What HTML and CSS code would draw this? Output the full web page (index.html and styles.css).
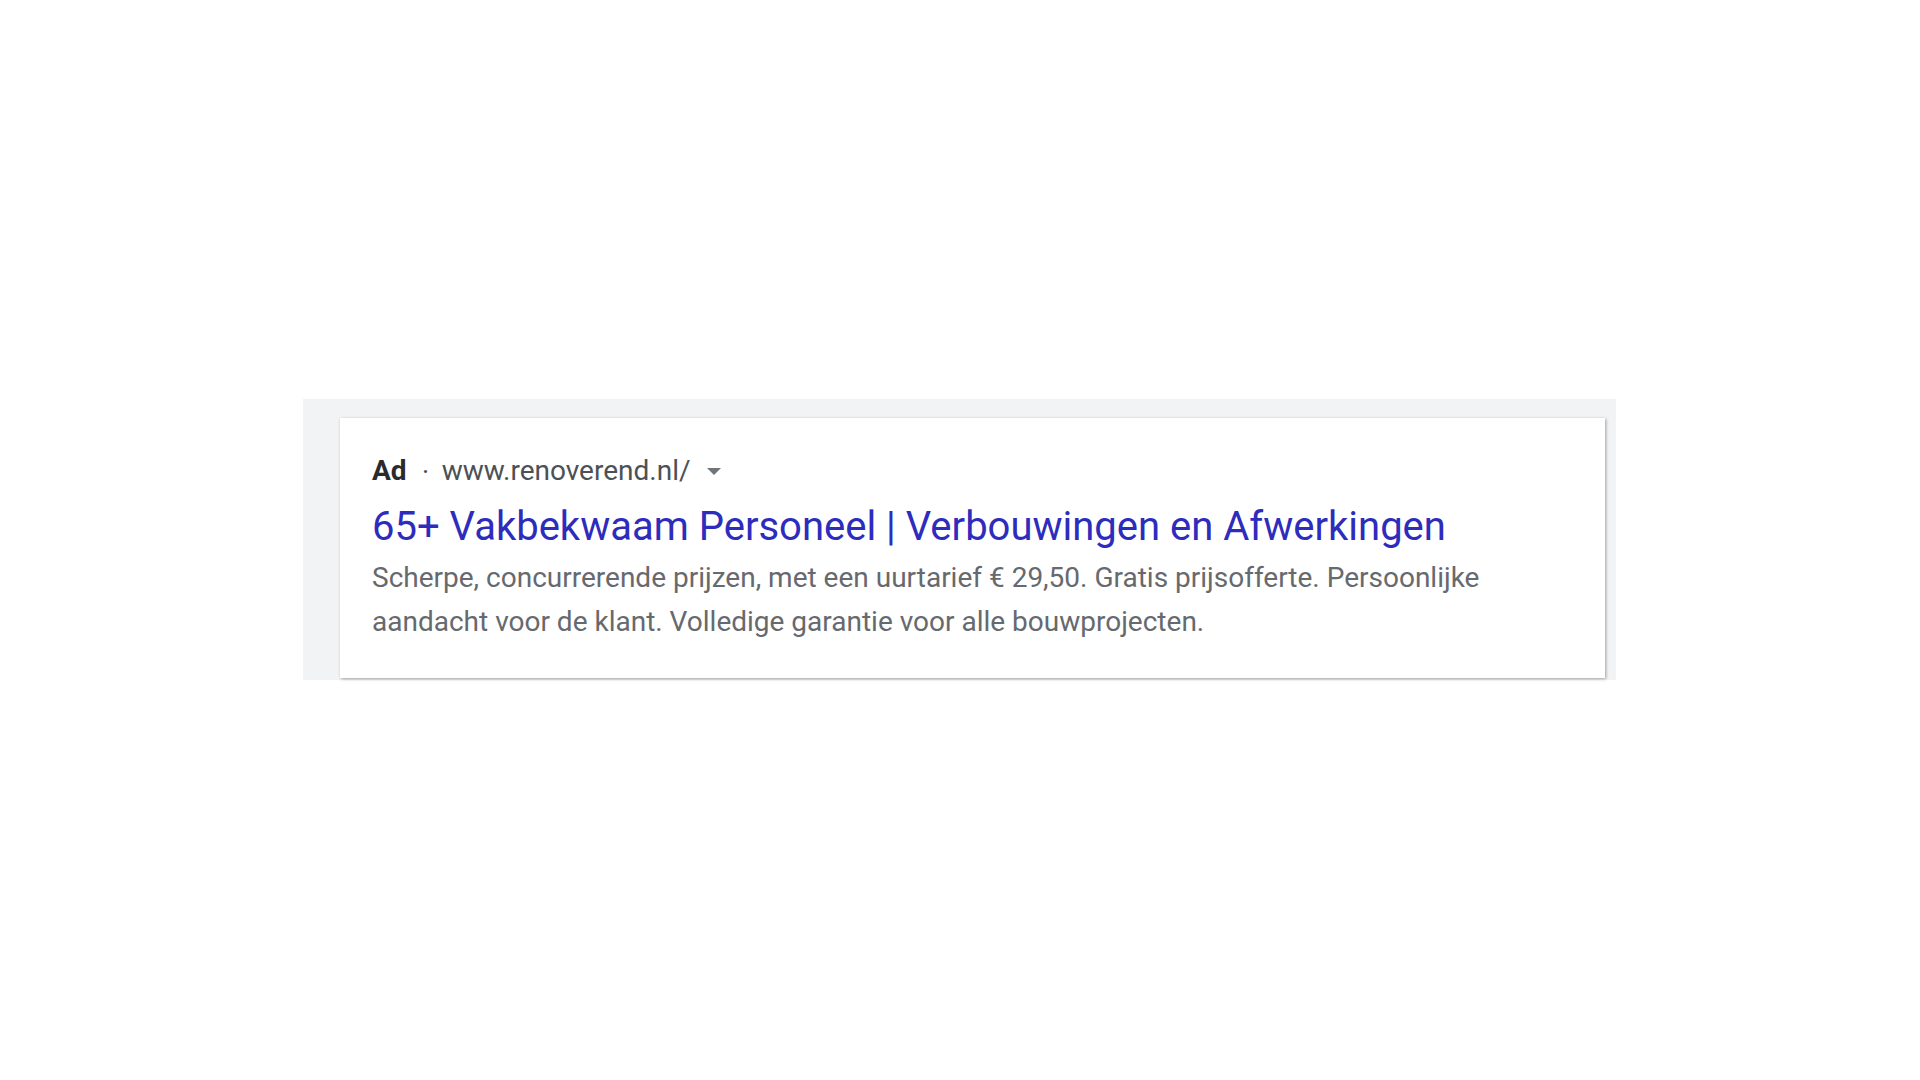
FILE: index.html
```html
<!DOCTYPE html>
<html lang="nl">
<head>
<meta charset="utf-8">
<title>Ad</title>
<link rel="stylesheet" href="styles.css">
</head>
<body>
<div class="stage">
  <div class="frame">
    <div class="card">
      <div class="meta">
        <span class="ad">Ad</span>
        <span class="dot">·</span>
        <span class="url">www.renoverend.nl/</span>
        <svg class="caret" width="16" height="8" viewBox="0 0 16 8"><path d="M1 0 L15 0 L8 7 Z" fill="#70757a"/></svg>
      </div>
      <div class="title">65+ Vakbekwaam Personeel | Verbouwingen en Afwerkingen</div>
      <div class="desc">Scherpe, concurrerende prijzen, met een uurtarief € 29,50. Gratis prijsofferte. Persoonlijke aandacht voor de klant. Volledige garantie voor alle bouwprojecten.</div>
    </div>
  </div>
</div>
</body>
</html>
```
FILE: styles.css
```css
html, body {
  margin: 0;
  padding: 0;
  background: #ffffff;
}
body {
  width: 1920px;
  height: 1080px;
  overflow: hidden;
  font-family: Roboto, "Liberation Sans", Arial, sans-serif;
}
.stage {
  padding: 399px 0 0 303px;
}
.frame {
  width: 1313px;
  height: 281px;
  box-sizing: border-box;
  background: #f1f3f4;
  padding: 19px 11px 0 37px;
}
.card {
  width: 1265px;
  height: 260px;
  box-sizing: border-box;
  background: #ffffff;
  box-shadow: 1px 1px 3px rgba(0,0,0,0.35);
  padding: 35px 32px 0 32px;
}
.meta {
  display: flex;
  align-items: center;
  height: 36px;
  font-size: 28px;
  line-height: 36px;
  color: #4d5156;
}
.ad {
  font-weight: 700;
  color: #2a2b2d;
}
.dot {
  margin: 0 13px 0 16px;
  font-weight: 700;
  font-size: 20px;
}
.caret {
  margin-left: 15px;
  margin-top: 2px;
}
.title {
  margin-top: 14px;
  font-size: 40px;
  line-height: 48px;
  color: #2d2cbc;
  white-space: nowrap;
}
.desc {
  margin-top: 5px;
  font-size: 28px;
  line-height: 44px;
  color: #66696d;
  width: 1120px;
}
```
